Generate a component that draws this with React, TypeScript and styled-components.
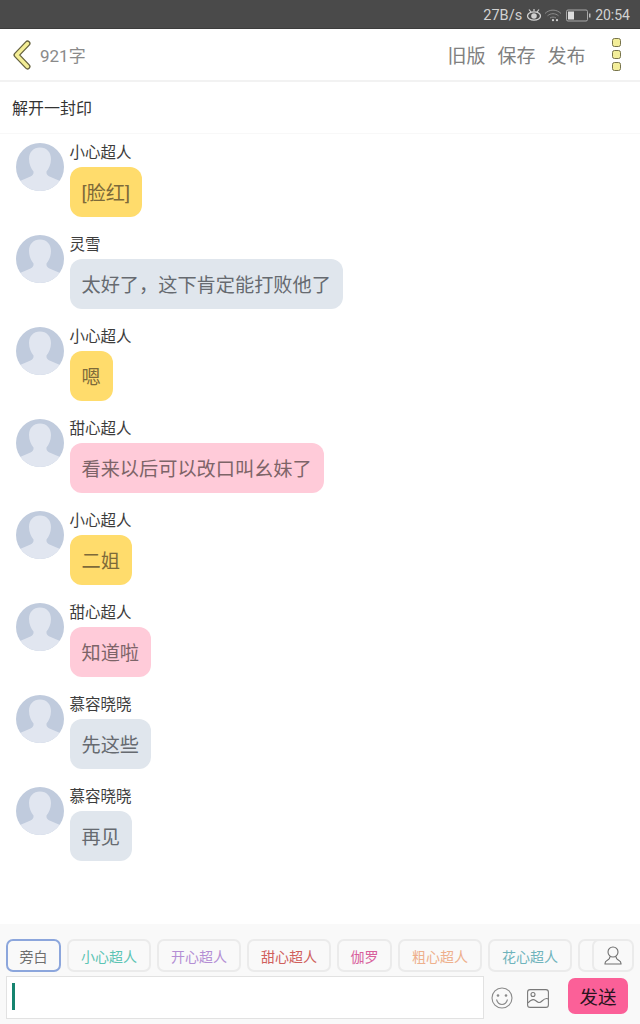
import styled, { createGlobalStyle } from "styled-components";

const GlobalStyle = createGlobalStyle`
  html, body {
    margin: 0;
    padding: 0;
    background: #fff;
  }
  * {
    box-sizing: border-box;
  }
`;

const Page = styled.div`
  width: 640px;
  height: 1024px;
  display: flex;
  flex-direction: column;
  overflow: hidden;
  font-family: "Roboto", "Noto Sans CJK SC", sans-serif;
  background: #fff;
`;
const StatusBar = styled.div`
  height: 29px;
  flex: none;
  background: #4a4a4a;
  border-bottom: 1px solid #3c3c3c;
  color: #d2d2d2;
  font-size: 14px;
  display: flex;
  align-items: center;
  justify-content: flex-end;
  padding: 2px 10px 0 0;
  gap: 4px;
`;
const NetSpeed = styled.span`
  font-size: 14.5px;
`;
const EyeIcon = styled.svg`
  margin-right: -2px;
`;
const NavBar = styled.div`
  height: 53px;
  flex: none;
  display: flex;
  align-items: center;
  padding: 0 19px 0 12px;
  border-bottom: 2px solid #f2f2f2;
`;
const WordCount = styled.span`
  margin-left: 8px;
  font-size: 17px;
  color: #8a8a8a;
  flex: 1;
`;
const NavLink = styled.span`
  font-size: 19px;
  color: #808080;
  margin-right: 12px;
`;
const MenuDots = styled.div`
  display: flex;
  flex-direction: column;
  gap: 2.500px;
  margin-left: 14px;
`;
const Dot = styled.span`
  width: 9.500px;
  height: 9.500px;
  background: #f3ee9a;
  border: 1.5px solid #77734a;
  border-radius: 2.5px;
`;
const TitleRow = styled.div`
  height: 52px;
  flex: none;
  display: flex;
  align-items: center;
  padding: 0 0 2px 12px;
  font-size: 16px;
  color: #333;
  border-bottom: 1px solid #f8f8f8;
`;
const MessageList = styled.div`
  flex: 1;
  padding: 9px 0 0 15.5px;
  display: flex;
  flex-direction: column;
  gap: 17px;
`;
const MessageRow = styled.div`
  display: flex;
  gap: 6px;
  height: 75px;
`;
const Avatar = styled.svg`
  width: 48px;
  height: 48px;
  flex: none;
`;
const MessageBody = styled.div`
  display: flex;
  flex-direction: column;
  align-items: flex-start;
`;
const SenderName = styled.div`
  font-size: 15.5px;
  line-height: 20px;
  height: 24px;
  color: #3c3c3c;
`;
const Bubble = styled.div<{ $bg: string; $color: string }>`
  height: 50px;
  padding: 0 12px;
  display: flex;
  align-items: center;
  border-radius: 12px;
  font-size: 19.2px;
  background: ${(props) => props.$bg};
  color: ${(props) => props.$color};
`;
const Footer = styled.div`
  height: 100px;
  flex: none;
  background: #f9f9f9;
  padding: 15px 0 0 6px;
  display: flex;
  flex-direction: column;
  gap: 4px;
`;
const TabStrip = styled.div`
  position: relative;
  height: 33px;
  display: flex;
  gap: 6px;
  overflow: hidden;
`;
const Tab = styled.div<{ $color: string; $active?: boolean; $w: number }>`
  width: ${(props) => props.$w}px;
  flex: none;
  height: 33px;
  display: flex;
  align-items: center;
  justify-content: center;
  font-size: 14px;
  background: #f9f9f9;
  border-radius: 7px;
  color: ${(props) => props.$color};
  border: ${(props) => (props.$active ? "2px solid #8ca6dc" : "2px solid #ebebeb")};
`;
const ContactsButton = styled.div`
  position: absolute;
  top: 0;
  left: 586px;
  width: 42px;
  height: 33px;
  background: #f9f9f9;
  border: 2px solid #ebebeb;
  border-radius: 7px;
  display: flex;
  align-items: center;
  justify-content: center;
`;
const InputRow = styled.div`
  display: flex;
  align-items: flex-start;
`;
const TextBox = styled.div`
  width: 478px;
  height: 43px;
  background: #fff;
  border: 1.5px solid #e2e2e2;
  padding: 6px 0 0 5px;
`;
const Caret = styled.div`
  width: 2.5px;
  height: 27px;
  background: #16846f;
`;
const IconGroup = styled.div`
  display: flex;
  align-items: center;
  gap: 14px;
  margin: 5px 0 0 7px;
  height: 34px;
`;
const SendButton = styled.div`
  width: 60px;
  height: 36px;
  margin: 2px 0 0 19px;
  background: #fb6098;
  border-radius: 7px;
  color: #2a1420;
  font-size: 18.5px;
  display: flex;
  align-items: center;
  justify-content: center;
`;

const YELLOW = { $bg: "#ffdc6c", $color: "#7d6a3a" };
const GREY = { $bg: "#e0e6ed", $color: "#666a70" };
const PINK = { $bg: "#ffcbd9", $color: "#7d6468" };

const messages = [
  { name: "小心超人", text: "[脸红]", tone: YELLOW },
  { name: "灵雪", text: "太好了，这下肯定能打败他了", tone: GREY },
  { name: "小心超人", text: "嗯", tone: YELLOW },
  { name: "甜心超人", text: "看来以后可以改口叫幺妹了", tone: PINK },
  { name: "小心超人", text: "二姐", tone: YELLOW },
  { name: "甜心超人", text: "知道啦", tone: PINK },
  { name: "慕容晓晓", text: "先这些", tone: GREY },
  { name: "慕容晓晓", text: "再见", tone: GREY },
];

const tabs = [
  { label: "旁白", color: "#6f6f6f", w: 55, active: true },
  { label: "小心超人", color: "#5cc4b4", w: 84 },
  { label: "开心超人", color: "#b48ed4", w: 84 },
  { label: "甜心超人", color: "#d0605c", w: 84 },
  { label: "伽罗", color: "#d8609c", w: 55 },
  { label: "粗心超人", color: "#eeb08c", w: 84 },
  { label: "花心超人", color: "#70b4bc", w: 84 },
  { label: "", color: "#6f6f6f", w: 40 },
];

function PersonAvatar() {
  return (
    <Avatar viewBox="0 0 48 48">
      <defs>
        <clipPath id="avatar-circle">
          <circle cx="24" cy="24" r="24" />
        </clipPath>
      </defs>
      <circle cx="24" cy="24" r="24" fill="#c0cbdd" />
      <g clipPath="url(#avatar-circle)" fill="#e1e6f0">
        <path d="M24 4.500c-6.500 0-11 4.500-11 11.500 0 5 2 9.500 4.500 12.500.3 2.500-.8 4-3 5L4 38c3.500 7 13 11 20 11s16.500-4 20-11l-10.500-4.500c-2.200-1-3.300-2.500-3-5 2.500-3 4.500-7.500 4.500-12.500 0-7-4.500-11.500-11-11.500z" />
      </g>
    </Avatar>
  );
}

export default function App() {
  return (
    <Page>
      <GlobalStyle />
      <StatusBar>
        <NetSpeed>27B/s</NetSpeed>
        <EyeIcon width="16" height="14" viewBox="0 0 16 14" fill="none" stroke="#d2d2d2">
          <ellipse cx="8" cy="8" rx="6.500" ry="4.200" strokeWidth="1.300" />
          <circle cx="8" cy="8" r="2.800" fill="#d2d2d2" stroke="none" />
          <path d="M3 1.500 5 4M13 1.500 11 4M8 1v2" strokeWidth="1.200" />
        </EyeIcon>
        <svg width="18" height="14" viewBox="0 0 18 14" fill="none" stroke="#8c8c8c" strokeWidth="1">
          <path d="M1 5.500c4.500-4.500 11.500-4.500 16 0M3.500 7.800c3.300-2.800 7.700-2.800 11 0M6 10c1.800-1.200 4.200-1.200 6 0" />
          <circle cx="9" cy="12.200" r="1.100" fill="#d2d2d2" stroke="none" />
          <circle cx="13" cy="12.200" r="1.100" fill="#d2d2d2" stroke="none" />
        </svg>
        <svg width="25" height="13" viewBox="0 0 25 13" fill="none">
          <rect x="0.500" y="1" width="21" height="11" rx="1.500" stroke="#a8a8a8" />
          <rect x="2" y="2.500" width="6" height="8" fill="#dcdcdc" />
          <rect x="23" y="4.500" width="1.500" height="4" fill="#bdbdbd" />
        </svg>
        <span>20:54</span>
      </StatusBar>
      <NavBar>
        <svg width="20" height="30" viewBox="0 0 20 30">
          <path
            d="M15.500 3.500 4.500 15l11 11.500"
            fill="none"
            stroke="#66623f"
            strokeWidth="6"
            strokeLinecap="round"
            strokeLinejoin="round"
          />
          <path
            d="M15.500 3.500 4.500 15l11 11.500"
            fill="none"
            stroke="#f4ee96"
            strokeWidth="3.400"
            strokeLinecap="round"
            strokeLinejoin="round"
          />
        </svg>
        <WordCount>921字</WordCount>
        <NavLink>旧版</NavLink>
        <NavLink>保存</NavLink>
        <NavLink>发布</NavLink>
        <MenuDots>
          <Dot />
          <Dot />
          <Dot />
        </MenuDots>
      </NavBar>
      <TitleRow>解开一封印</TitleRow>
      <MessageList>
        {messages.map((message, i) => (
          <MessageRow key={i}>
            <PersonAvatar />
            <MessageBody>
              <SenderName>{message.name}</SenderName>
              <Bubble {...message.tone}>{message.text}</Bubble>
            </MessageBody>
          </MessageRow>
        ))}
      </MessageList>
      <Footer>
        <TabStrip>
          {tabs.map((tab, i) => (
            <Tab key={i} $color={tab.color} $w={tab.w} $active={tab.active}>
              {tab.label}
            </Tab>
          ))}
          <ContactsButton>
            <svg width="18" height="19" viewBox="0 0 18 19" fill="none" stroke="#707070" strokeWidth="1.100">
              <circle cx="9" cy="6" r="5" />
              <path d="M6 10.500c0 2.200-1 3-3 3.900-1.500.7-2 1.500-2 3v.6h16v-.6c0-1.500-.5-2.300-2-3-2-.9-3-1.700-3-3.900" />
            </svg>
          </ContactsButton>
        </TabStrip>
        <InputRow>
          <TextBox>
            <Caret />
          </TextBox>
          <IconGroup>
            <svg width="22" height="22" viewBox="0 0 22 22" fill="none" stroke="#8a8a8a" strokeWidth="1.100">
              <circle cx="11" cy="11" r="10" />
              <circle cx="7" cy="8.500" r="1.300" fill="#8a8a8a" stroke="none" />
              <circle cx="15" cy="8.500" r="1.300" fill="#8a8a8a" stroke="none" />
              <path d="M5.500 12.500c1 3.500 3.200 5 5.500 5s4.500-1.500 5.500-5" />
            </svg>
            <svg width="22" height="19" viewBox="0 0 22 19" fill="none" stroke="#7a7a7a" strokeWidth="1.100">
              <rect x="0.600" y="0.600" width="20.800" height="17.800" rx="2.500" />
              <circle cx="6" cy="5.500" r="2" />
              <path d="M1 14c3-3.500 5-4.500 7.500-2.500s4 3 6.500.5 4-3.500 6.500-2" />
            </svg>
          </IconGroup>
          <SendButton>发送</SendButton>
        </InputRow>
      </Footer>
    </Page>
  );
}
